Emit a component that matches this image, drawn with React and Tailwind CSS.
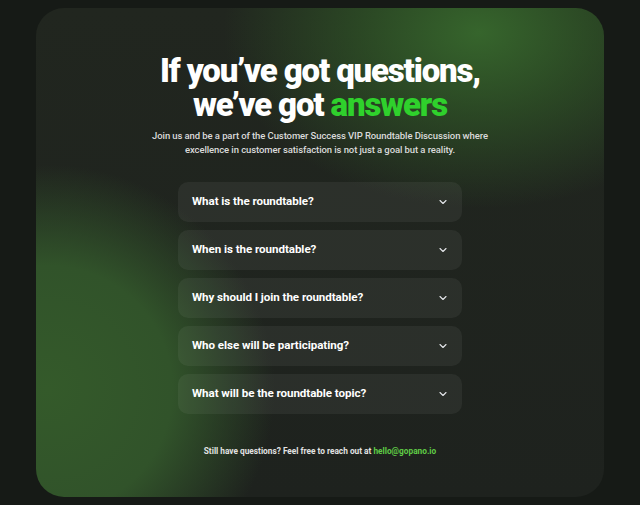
import { ChevronDown } from 'lucide-react';

const questions = [
  'What is the roundtable?',
  'When is the roundtable?',
  'Why should I join the roundtable?',
  'Who else will be participating?',
  'What will be the roundtable topic?',
];

const FaqItem = ({ question }) => {
  return (
    <button className="flex h-10 w-full items-center justify-between rounded-[10px] bg-white/[0.055] pl-[14px] pr-[13px] text-left">
      <span className="text-[11.6px] font-bold tracking-[-0.005em] text-white">{question}</span>
      <ChevronDown className="h-[12px] w-[12px] text-gray-200" strokeWidth={2.2} />
    </button>
  );
};

export default function App() {
  return (
    <div
      className="min-h-[505px] w-full bg-[#161a16] px-[36px] pt-2 pb-2"
      style={{ fontFamily: 'Roboto, "Liberation Sans", sans-serif' }}
    >
      <div className="relative h-[489px] overflow-hidden rounded-[28px] bg-[radial-gradient(ellipse_45%_36%_at_78%_5%,#36652c_0%,rgba(50,95,40,0.6)_45%,transparent_100%),radial-gradient(ellipse_40%_46%_at_2%_78%,#345a2a_0%,#31532a_55%,transparent_100%),linear-gradient(180deg,#21261f_0%,#1e221e_100%)]">
        <div className="flex flex-col items-center pt-[46px]">
          <h1 className="text-center text-[33px] leading-[34px] font-black tracking-[-0.035em] text-white">
            If you’ve got questions,
            <br />
            we’ve got <span className="text-[#2fd12c]">answers</span>
          </h1>
          <p className="mt-[7px] w-[340px] text-center text-[9.5px] leading-[14px] font-medium tracking-[-0.01em] text-[#dadada]">
            Join us and be a part of the Customer Success VIP Roundtable Discussion where excellence in customer satisfaction is not just a goal but a reality.
          </p>

          <div className="mt-[25px] flex w-[284px] flex-col gap-2">
            {questions.map((q) => (
              <FaqItem key={q} question={q} />
            ))}
          </div>

          <p className="mt-[31px] text-[8.3px] font-bold text-[#e2e2e2]">
            Still have questions? Feel free to reach out at{' '}
            <span className="text-[#5fcb46]">hello@gopano.io</span>
          </p>
        </div>
      </div>
    </div>
  );
}
